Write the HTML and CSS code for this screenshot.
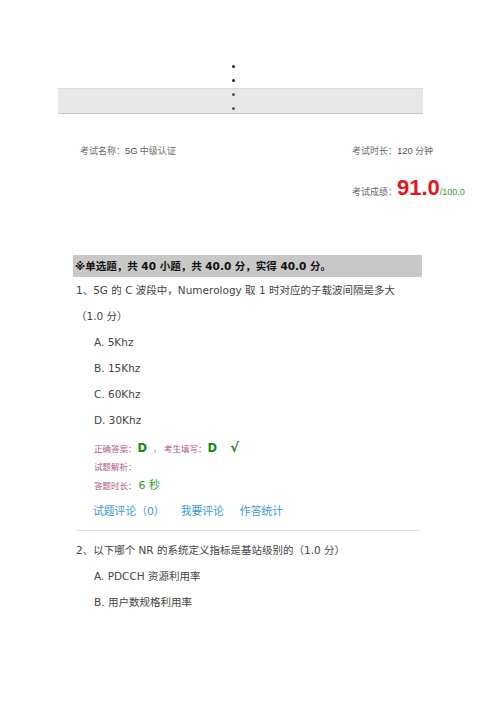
FILE: index.html
```html
<!DOCTYPE html>
<html lang="zh-CN">
<head>
<meta charset="utf-8">
<title>考试结果</title>
<link rel="stylesheet" href="styles.css">
</head>
<body>
<div class="page">
  <nav class="topnav">
    <div class="dots">
      <span class="dot"></span>
      <span class="dot"></span>
    </div>
    <div class="navbar">
      <span class="dot dot-light"></span>
      <span class="dot dot-light"></span>
    </div>
  </nav>

  <div class="info">
    <div class="info-item">考试名称：<span class="info-val">5G</span> 中级认证</div>
    <div class="info-item">考试时长：<span class="info-val">120</span> 分钟</div>
  </div>
  <div class="score">考试成绩：<span class="score-num">91.0</span><span class="score-total">/100.0</span></div>

  <section class="content">
    <div class="section-head">※单选题，共 40 小题，共 40.0 分，实得 40.0 分。</div>

    <div class="question">
      <p class="q-title">1、5G 的 C 波段中，Numerology 取 1 时对应的子载波间隔是多大<br>（1.0 分）</p>
      <ul class="options">
        <li>A. 5Khz</li>
        <li>B. 15Khz</li>
        <li>C. 60Khz</li>
        <li>D. 30Khz</li>
      </ul>
      <div class="answer">
        <div class="ans-row"><span class="label">正确答案：</span><span class="val">D</span><span class="sep">，</span><span class="label">考生填写：</span><span class="val">D</span><span class="check">√</span></div>
        <div class="ans-row"><span class="label">试题解析：</span></div>
        <div class="ans-row"><span class="label">答题时长：</span><span class="time">6 秒</span></div>
      </div>
      <div class="links">
        <a class="link">试题评论（0）</a>
        <a class="link">我要评论</a>
        <a class="link">作答统计</a>
      </div>
    </div>

    <div class="divider"></div>

    <div class="question">
      <p class="q-title q2">2、以下哪个 NR 的系统定义指标是基站级别的（1.0 分）</p>
      <ul class="options">
        <li>A. PDCCH 资源利用率</li>
        <li>B. 用户数规格利用率</li>
      </ul>
    </div>
  </section>
</div>
</body>
</html>
```

FILE: styles.css
```css
html, body {
  margin: 0;
  padding: 0;
  background: #ffffff;
}

.page {
  width: 365px;
  margin-left: 58px;
  padding-top: 65px;
  font-family: "DejaVu Sans", "Noto Sans CJK SC", sans-serif;
}

/* top nav */
.topnav {
  display: flex;
  flex-direction: column;
}

.dots {
  display: flex;
  flex-direction: column;
  gap: 11px;
  padding-left: 174px;
}

.dot {
  display: block;
  width: 3px;
  height: 3px;
  border-radius: 50%;
  background: #222;
}

.dot-light {
  background: #555;
}

.navbar {
  margin-top: 6px;
  height: 26px;
  box-sizing: border-box;
  padding: 4px 0 0 174px;
  display: flex;
  flex-direction: column;
  gap: 11px;
  background: #e8e8e8;
  border-top: 1px solid #dcdcdc;
  border-bottom: 1px solid #c8c8c8;
}

/* exam info */
.info {
  margin-top: 27px;
  display: grid;
  grid-template-columns: 272px auto;
  padding-left: 22px;
  line-height: 20px;
}

.info-item,
.score {
  font-family: "Noto Sans CJK SC", sans-serif;
  font-size: 9px;
  color: #6a6a6a;
  white-space: nowrap;
}

.info-val {
  font-family: "Liberation Sans", Arial, sans-serif;
  font-size: 9.5px;
  color: #555;
}

.score {
  margin-top: 13px;
  padding-left: 294px;
  line-height: 28px;
}

.score-num {
  font-family: "Liberation Sans", Arial, sans-serif;
  font-weight: bold;
  font-size: 22px;
  color: #e8141c;
}

.score-total {
  font-family: "Liberation Sans", Arial, sans-serif;
  font-size: 9px;
  color: #2f9a2f;
}

/* content */
.content {
  margin-top: 49px;
  margin-left: 15px;
  width: 349px;
}

.section-head {
  height: 22px;
  line-height: 22px;
  padding-left: 2px;
  background: #c8c8c8;
  font-weight: bold;
  font-size: 10.5px;
  color: #111;
  white-space: nowrap;
}

.question {
  padding-left: 3px;
}

.q-title {
  margin: 0;
  font-size: 10.5px;
  line-height: 26px;
  color: #444;
}

.q2 {
  margin-top: 6px;
}

.options {
  list-style: none;
  margin: 0;
  padding: 0 0 0 18px;
  font-size: 10.5px;
  line-height: 26px;
  color: #444;
}

.answer {
  margin-top: 4.5px;
  padding-left: 18px;
}

.ans-row {
  height: 19px;
  line-height: 19px;
  display: flex;
  align-items: baseline;
}

.label {
  font-family: "Noto Sans CJK SC", sans-serif;
  font-size: 8.5px;
  color: #b5567e;
}

.val {
  margin-left: 1px;
  font-family: "DejaVu Sans", sans-serif;
  font-weight: bold;
  font-size: 11.5px;
  color: #138a13;
}

.sep {
  margin-left: 6px;
  margin-right: 3px;
  font-size: 8px;
  color: #888;
}

.check {
  margin-left: 13px;
  font-family: "DejaVu Sans", sans-serif;
  font-weight: bold;
  font-size: 13px;
  color: #138a13;
}

.time {
  margin-left: 2px;
  font-size: 11px;
  color: #2a9a2a;
}

.links {
  margin-top: 4px;
  padding-left: 17px;
  display: flex;
  gap: 16px;
  line-height: 26px;
  font-size: 10.8px;
}

.link {
  color: #3b9ad6;
  text-decoration: none;
}

.divider {
  margin-top: 5.5px;
  margin-left: 3px;
  width: 344px;
  border-top: 1px solid #dedede;
}
```
